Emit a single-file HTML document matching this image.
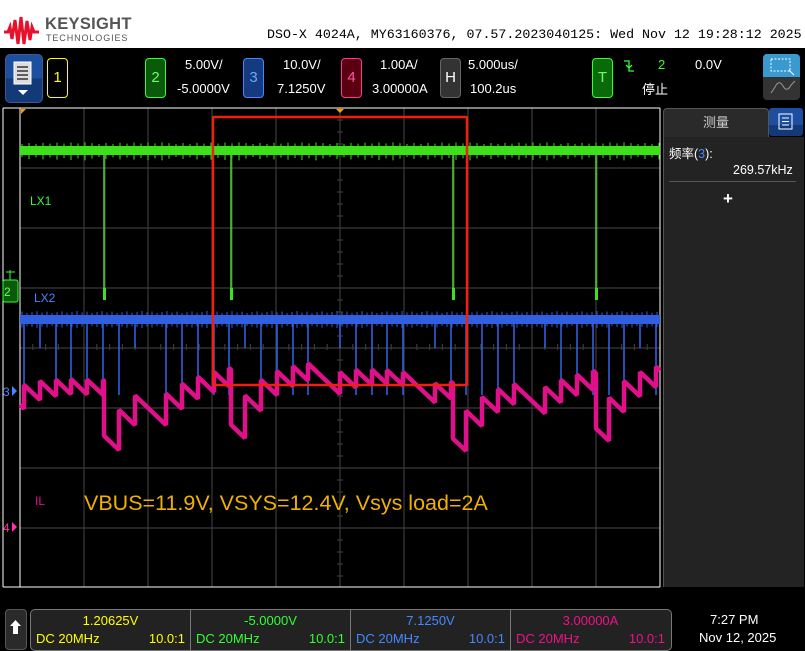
<!DOCTYPE html>
<html><head><meta charset="utf-8"><style>
body{margin:0;width:805px;height:651px;overflow:hidden;background:#000;font-family:"Liberation Sans","Noto Sans CJK SC",sans-serif;position:relative}
.a{position:absolute}
.hdr{left:0;top:0;width:805px;height:48px;background:#fff}
.mono{font-family:"Liberation Mono",monospace;font-size:13.3px;color:#000;left:267px;top:27px;white-space:nowrap}
.tb{color:#fff;font-size:13px}
.box{position:absolute;border-radius:4px;font-size:15px;text-align:center;line-height:37px}
.cell{position:absolute;top:0;height:40px;width:159px;border-right:1px solid #777;font-size:13px}
.cell .v{position:absolute;top:3px;width:100%;text-align:center}
.cell .l{position:absolute;left:5px;top:21px}
.cell .r{position:absolute;right:5px;top:21px}
</style></head><body>
<div class="a hdr"></div>
<svg class="a" style="left:4px;top:15px" width="36" height="32" viewBox="0 0 36 32"><path d="M0 17 L4 17 L6 12 L8 24 L11 5 L14 29 L17 2 L20 29 L23 6 L26 25 L28 12 L30 17 L35 17" fill="none" stroke="#e8102a" stroke-width="3"/></svg>
<div class="a" style="left:45px;top:15px;font-weight:bold;font-size:16.5px;color:#555;letter-spacing:0.3px">KEYSIGHT</div>
<div class="a" style="left:46px;top:33px;font-size:9px;color:#555;letter-spacing:0.9px">TECHNOLOGIES</div>
<div class="a mono">DSO-X 4024A, MY63160376, 07.57.2023040125: Wed Nov 12 19:28:12 2025</div>

<div class="a" style="left:5px;top:54px;width:36px;height:47px;border-radius:5px;background:linear-gradient(#1d4fa0 50%,#123a78 50%);border:1px solid #3a5a90"></div>
<svg class="a" style="left:12px;top:60px" width="22" height="38"><rect x="2" y="2" width="17" height="22" fill="#ddd" stroke="#fff"/><g stroke="#333" stroke-width="1.5"><line x1="5" y1="7" x2="16" y2="7"/><line x1="5" y1="11" x2="16" y2="11"/><line x1="5" y1="15" x2="16" y2="15"/><line x1="5" y1="19" x2="16" y2="19"/></g><path d="M6 30 L16 30 L11 35Z" fill="#fff"/></svg>
<div class="box" style="left:47px;top:58px;width:19px;height:38px;border:1px solid #ff0;color:#ff0">1</div>
<div class="box" style="left:145px;top:58px;width:19px;height:38px;border:1px solid #3f3;background:#0b5a0b;color:#6f6">2</div>
<div class="a tb" style="left:185px;top:57px">5.00V/</div><div class="a tb" style="left:177px;top:81px">-5.0000V</div>
<div class="box" style="left:243px;top:58px;width:19px;height:38px;border:1px solid #48f;background:#163a80;color:#6af">3</div>
<div class="a tb" style="left:283px;top:57px">10.0V/</div><div class="a tb" style="left:277px;top:81px">7.1250V</div>
<div class="box" style="left:341px;top:58px;width:19px;height:38px;border:1px solid #f39;background:#5a0010;color:#f5a">4</div>
<div class="a tb" style="left:380px;top:57px">1.00A/</div><div class="a tb" style="left:372px;top:81px">3.00000A</div>
<div class="box" style="left:440px;top:58px;width:19px;height:38px;border:1px solid #666;background:#333;color:#fff">H</div>
<div class="a tb" style="left:468px;top:57px">5.000us/</div><div class="a tb" style="left:470px;top:81px">100.2us</div>
<div class="box" style="left:592px;top:58px;width:19px;height:38px;border:1px solid #3f3;background:#0a6a0a;color:#6f6">T</div>
<svg class="a" style="left:623px;top:59px" width="12" height="14"><path d="M1 2 L6 2 L6 12 L11 12 M3 6 L6 9 L9 6" fill="none" stroke="#3f3" stroke-width="1.3"/></svg>
<div class="a tb" style="left:658px;top:57px;color:#3f3">2</div>
<div class="a tb" style="left:695px;top:57px">0.0V</div>
<div class="a tb" style="left:642px;top:79px">停止</div>
<div class="a" style="left:763px;top:54px;width:37px;height:46px;border-radius:4px;background:linear-gradient(#3a9ad0 50%,#333 50%)"></div>
<svg class="a" style="left:763px;top:54px" width="37" height="46"><rect x="8" y="5" width="19" height="12" fill="none" stroke="#fff" stroke-dasharray="2,1.5"/><path d="M26 16 L31 21" stroke="#fff"/><path d="M8 39 L12 33 Q16 25 20 32 Q24 39 28 31 L32 27" fill="none" stroke="#999"/></svg>

<svg class="a" style="left:0;top:100px" width="805" height="500" id="pl">
<g stroke="#3a3a3a" stroke-width="1.2" id="grid"></g>
<line x1="3" y1="8" x2="660" y2="8" stroke="#fff"/>
<line x1="20" y1="8" x2="20" y2="487" stroke="#fff"/>
<line x1="3" y1="8" x2="3" y2="487" stroke="#fff"/>
<line x1="660" y1="8" x2="660" y2="487" stroke="#fff"/>
<line x1="3" y1="487" x2="660" y2="487" stroke="#fff"/>
<path d="M21 9 L26 9 L21 14Z" fill="#f90"/>
<path d="M336 9 L344 9 L340 13Z" fill="#f90"/>
<g id="tr"></g>
<rect x="213" y="17" width="254" height="268" fill="none" stroke="#f02010" stroke-width="2.5" rx="1"/>
<text x="30" y="105" fill="#3f3" font-size="12" font-family="Liberation Sans">LX1</text>
<text x="34" y="202" fill="#48f" font-size="12" font-family="Liberation Sans">LX2</text>
<text x="35" y="405" fill="#e0108a" font-size="12" font-family="Liberation Sans">IL</text>
<text x="84" y="410" fill="#f0b000" font-size="21.5" font-family="Liberation Sans">VBUS=11.9V, VSYS=12.4V, Vsys load=2A</text>
<rect x="3" y="180" width="15" height="22" rx="2" fill="#0a5a0a" stroke="#3f3"/>
<text x="4" y="196" fill="#6f6" font-size="12">2</text>
<path d="M10 170 L10 180 M6 172 L15 172" stroke="#3f3"/>
<path d="M12 286 L17 291 L12 296Z" fill="#48f"/><text x="3" y="296" fill="#48f" font-size="12">3</text>
<path d="M12 422 L17 427 L12 432Z" fill="#f3a"/><text x="3" y="432" fill="#f3a" font-size="12">4</text>
</svg>

<div class="a" style="left:663px;top:108px;width:104px;height:30px;background:#2a2a2a;border:1px solid #555;border-bottom:none;border-radius:4px 4px 0 0;color:#ccc;font-size:13px;text-align:center;line-height:28px">测量</div>
<div class="a" style="left:769px;top:108px;width:34px;height:28px;background:linear-gradient(#1d4fa0 60%,#123a78 60%);border-radius:3px"></div>
<svg class="a" style="left:778px;top:113px" width="16" height="18"><rect x="1" y="1" width="13" height="15" fill="none" stroke="#fff"/><path d="M4 5H11M4 8.5H11M4 12H11" stroke="#fff"/></svg>
<div class="a" style="left:663px;top:137px;width:140px;height:450px;background:#232323;border-left:1px solid #555"></div>
<div class="a" style="left:669px;top:143px;color:#fff;font-size:12.5px">频率(<span style="color:#48f">3</span>):</div>
<div class="a" style="left:733px;top:163px;color:#fff;font-size:12.5px">269.57kHz</div>
<div class="a" style="left:669px;top:181px;width:127px;height:1px;background:#555"></div>
<div class="a" style="left:723px;top:189px;color:#fff;font-size:17px;font-weight:bold">+</div>

<div class="a" style="left:5px;top:609px;width:20px;height:39px;background:#2a2a2a;border:1px solid #555;border-radius:4px"></div>
<svg class="a" style="left:9px;top:619px" width="13" height="16"><path d="M6.5 1 L12 7 L9 7 L9 15 L4 15 L4 7 L1 7Z" fill="#fff"/></svg>
<div class="a" style="left:30px;top:609px;width:640px;height:40px;background:#222;border:1px solid #777;border-radius:5px;overflow:hidden">
<div class="cell" style="left:0;color:#ff0"><div class="v">1.20625V</div><div class="l">DC 20MHz</div><div class="r">10.0:1</div></div>
<div class="cell" style="left:160px;color:#3f3"><div class="v">-5.0000V</div><div class="l">DC 20MHz</div><div class="r">10.0:1</div></div>
<div class="cell" style="left:320px;color:#48f"><div class="v">7.1250V</div><div class="l">DC 20MHz</div><div class="r">10.0:1</div></div>
<div class="cell" style="left:480px;color:#f0108a;border:none"><div class="v">3.00000A</div><div class="l">DC 20MHz</div><div class="r">10.0:1</div></div>
</div>
<div class="a" style="left:710px;top:612px;color:#fff;font-size:13px">7:27 PM</div>
<div class="a" style="left:699px;top:630px;color:#fff;font-size:13px">Nov 12, 2025</div>

<script>
var ns="http://www.w3.org/2000/svg";
function el(p,t,a){var e=document.createElementNS(ns,t);for(var k in a)e.setAttribute(k,a[k]);p.appendChild(e);return e;}
var g=document.getElementById('grid');
for(var i=1;i<10;i++){var x=20+64*i;el(g,'line',{x1:x,y1:8,x2:x,y2:487});}
for(var j=1;j<8;j++){var y=8+60*j;el(g,'line',{x1:20,y1:y,x2:660,y2:y});}
for(var x=20;x<660;x+=12.8){el(g,'line',{x1:x,y1:244,x2:x,y2:250});}
for(var y=8;y<487;y+=12){el(g,'line',{x1:337,y1:y,x2:343,y2:y});}
var tr=document.getElementById('tr');
el(tr,'rect',{x:20,y:46,width:640,height:9,fill:'#3de01a'});
for(var x=22;x<660;x+=7){var h=(x*37%11)/3;el(tr,'line',{x1:x,y1:44-h/2,x2:x,y2:57+h,stroke:'#3de01a','stroke-width':1});}
var dips=[104,231,453,596];
dips.forEach(function(d){el(tr,'line',{x1:d,y1:50,x2:d,y2:200,stroke:'#3de01a','stroke-width':1.5});el(tr,'line',{x1:d+1,y1:55,x2:d+1,y2:200,stroke:'#777','stroke-width':0.7});el(tr,'rect',{x:d-1,y:188,width:3,height:12,fill:'#3de01a'});});
el(tr,'rect',{x:20,y:215,width:640,height:9,fill:'#3060e0'});
for(var x=22;x<660;x+=5){var h=(x*53%13)/3;el(tr,'line',{x1:x,y1:213-h/2,x2:x,y2:226+h/2,stroke:'#3060e0','stroke-width':1});}
var ev=[];for(var x=24;x<660;x+=15.8)ev.push(Math.round(x));
var skip={};[9,21,27,35].forEach(function(k){skip[k]=1;});
var pts=[],y=305,px=20;
pts.push([20,y]);
function adv(x){y+= (x-px)*0.95;px=x;pts.push([x,y]);}
var evs=ev.slice();dips.forEach(function(d){evs.push(d+1000);});
evs.sort(function(a,b){return (a%1000)-(b%1000)});
for(var k=0;k<evs.length;k++){var e=evs[k];
 if(e>=1000){var d=e-1000;adv(d);y+=55;pts.push([d,y]);continue;}
 adv(e);
 if(skip[k])continue;
 var tgt=285+10*Math.sin(e/60);
 var R=15+0.45*(y-tgt);if(R<5)R=5;
 y-=R;pts.push([e,y]);
 var long=(e*7%5==0);
 el(tr,'line',{x1:e,y1:215,x2:e,y2:long?248:295,stroke:'#3060e0','stroke-width':1.6});
}
adv(660);
el(tr,'polyline',{points:pts.map(function(p){return p[0]+','+(p[1])}).join(' '),fill:'none',stroke:'#e0108a','stroke-width':4.5,'stroke-linejoin':'bevel'});
</script>
</body></html>
